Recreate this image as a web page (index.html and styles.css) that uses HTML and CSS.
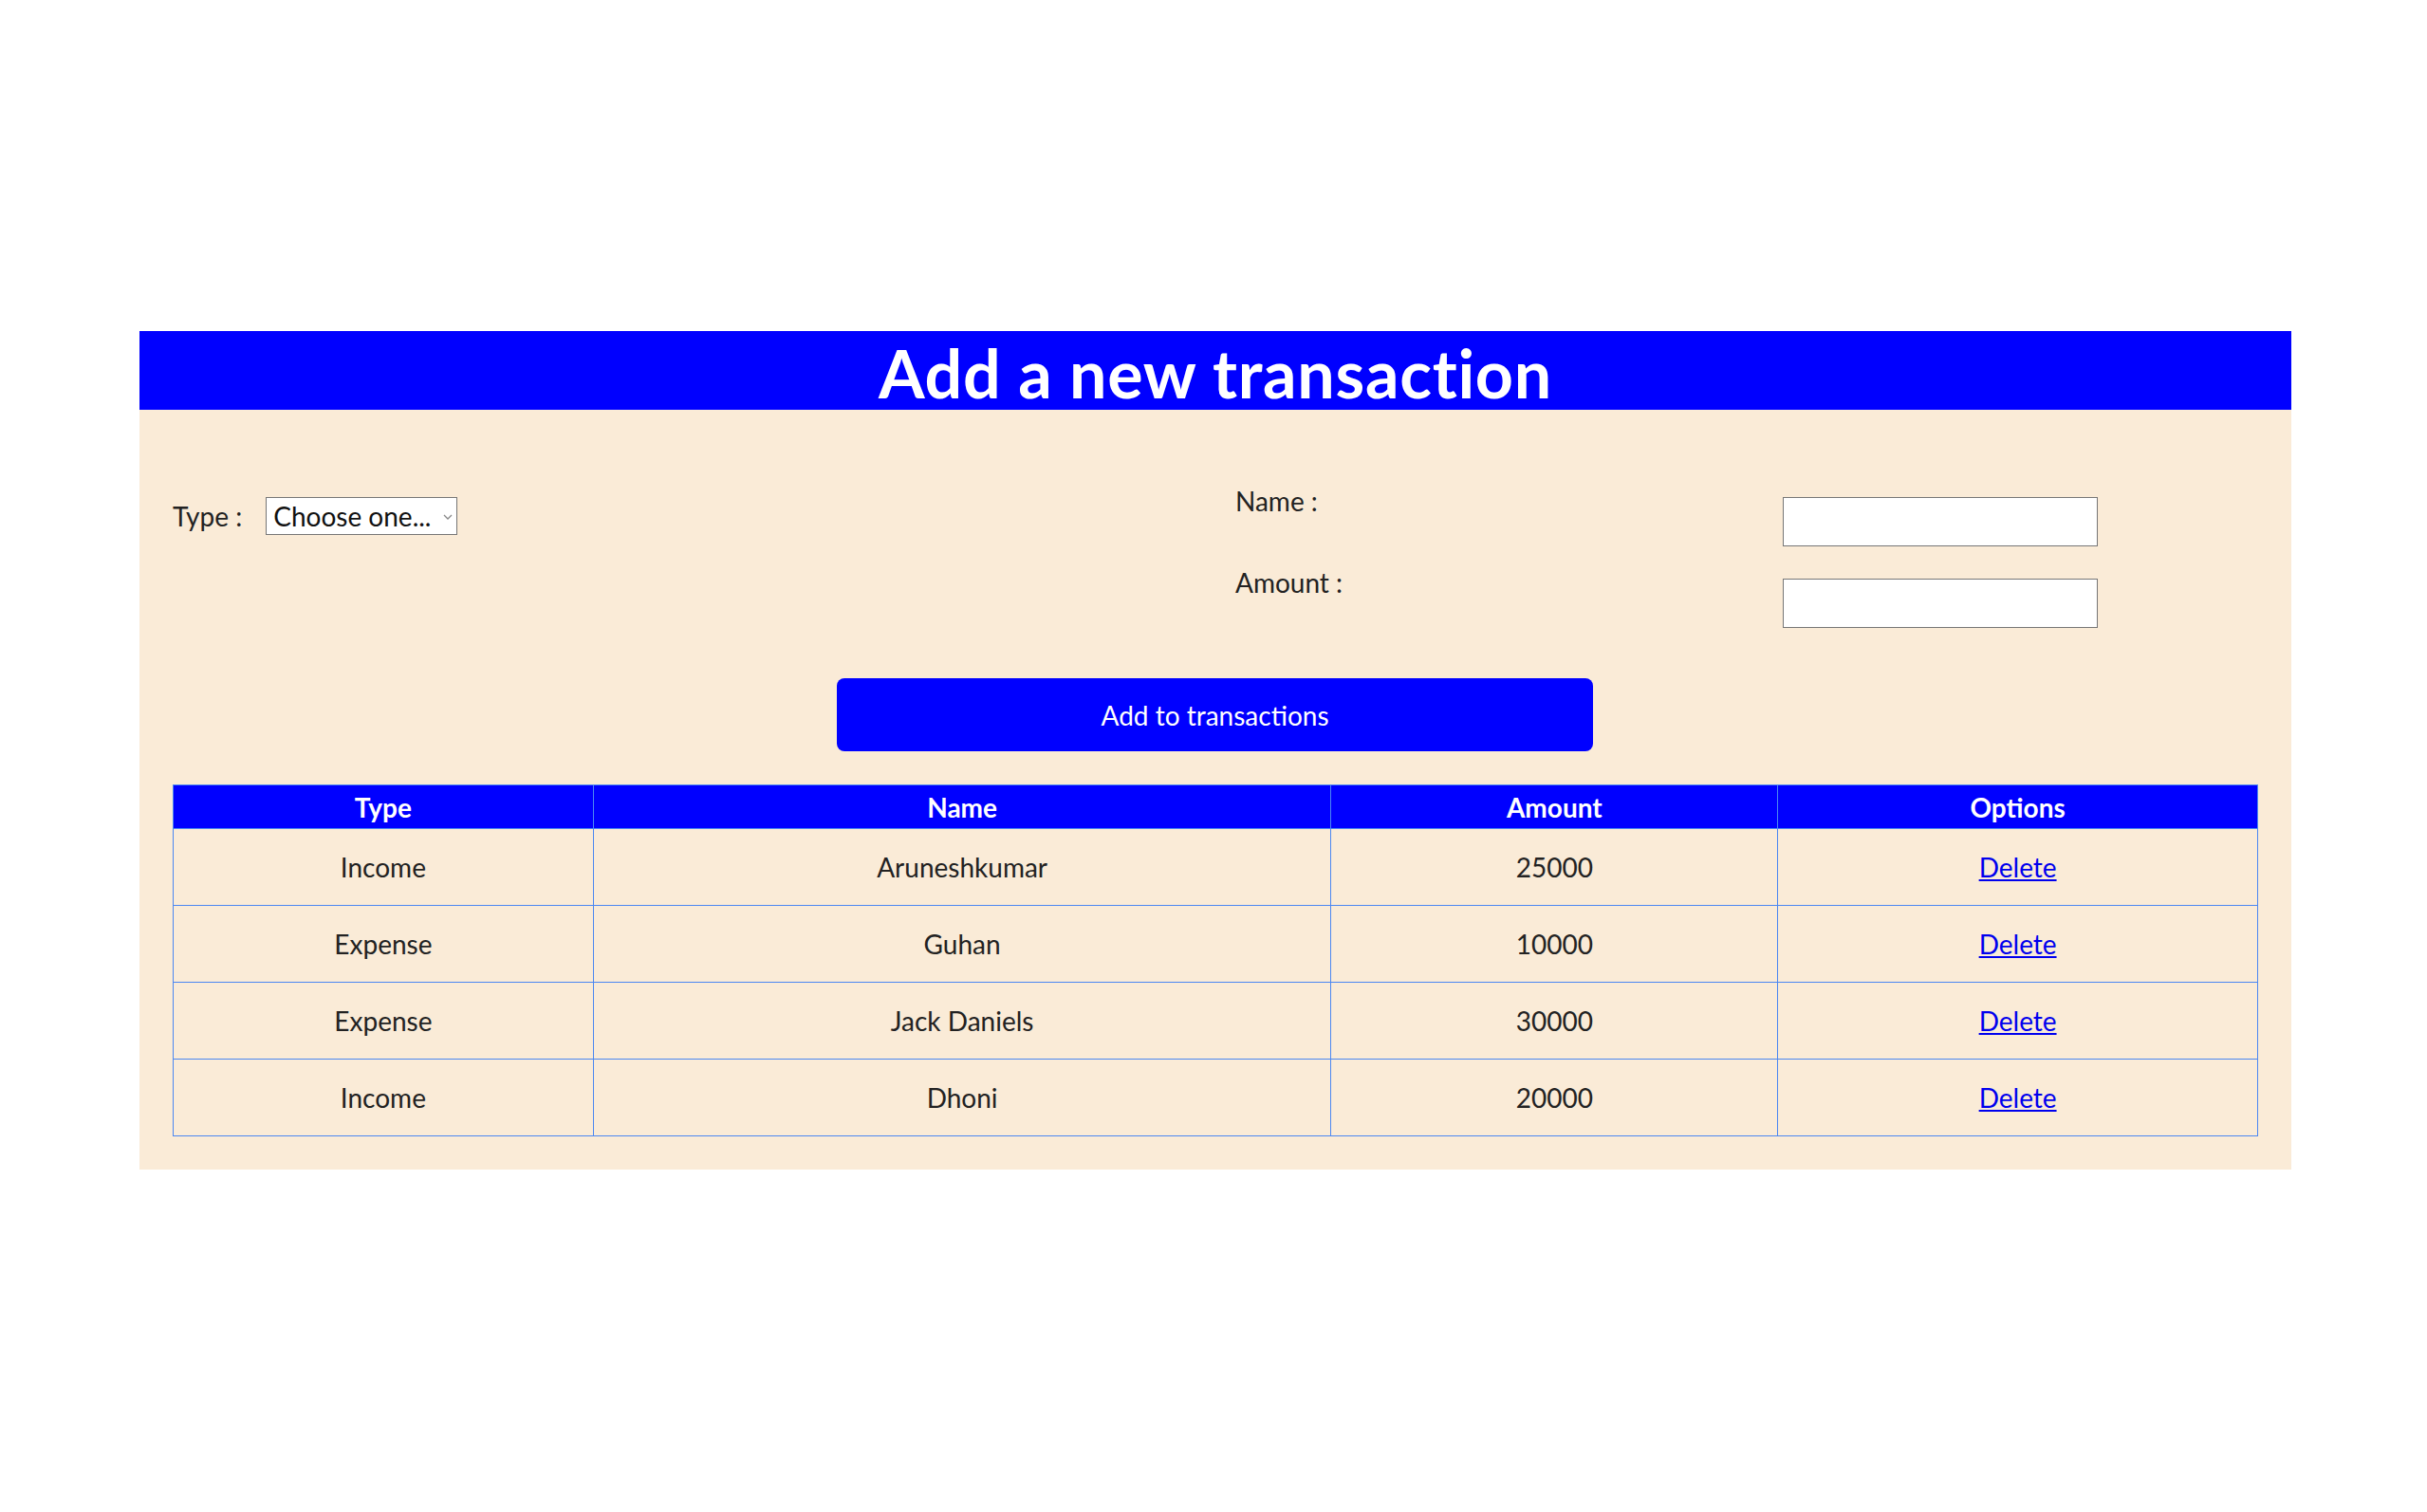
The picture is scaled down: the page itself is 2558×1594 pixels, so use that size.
FILE: index.html
```html
<!DOCTYPE html>
<html lang="en">
<head>
<meta charset="utf-8">
<title>Add a new transaction</title>
<link rel="stylesheet" href="styles.css">
</head>
<body>
<div class="card">
  <div class="card-title"><h1>Add a new transaction</h1></div>
  <div class="card-body">
    <div class="form-row">
      <div class="type-field">
        <label class="label" for="type">Type :</label>
        <span class="select-wrap">
          <select id="type" class="select">
            <option>Choose one...</option>
            <option>Income</option>
            <option>Expense</option>
          </select>
          <svg class="chevron" width="10" height="6" viewBox="0 0 10 6"><path d="M1 1 L5 5 L9 1" fill="none" stroke="#8a8a8a" stroke-width="1.3"/></svg>
        </span>
      </div>
      <div class="fields">
        <label class="label field-label" for="name">Name :</label>
        <input id="name" class="text-input" type="text">
        <label class="label field-label" for="amount">Amount :</label>
        <input id="amount" class="text-input" type="text">
      </div>
    </div>
    <div class="actions">
      <button class="add-btn" type="button">Add to transactions</button>
    </div>
    <table class="tx-table">
      <colgroup>
        <col class="c-type"><col class="c-name"><col class="c-amount"><col class="c-options">
      </colgroup>
      <thead>
        <tr><th>Type</th><th>Name</th><th>Amount</th><th>Options</th></tr>
      </thead>
      <tbody>
        <tr><td>Income</td><td>Aruneshkumar</td><td>25000</td><td><a href="#">Delete</a></td></tr>
        <tr><td>Expense</td><td>Guhan</td><td>10000</td><td><a href="#">Delete</a></td></tr>
        <tr><td>Expense</td><td>Jack Daniels</td><td>30000</td><td><a href="#">Delete</a></td></tr>
        <tr><td>Income</td><td>Dhoni</td><td>20000</td><td><a href="#">Delete</a></td></tr>
      </tbody>
    </table>
  </div>
</div>
</body>
</html>
```
FILE: styles.css
```css
html, body {
  margin: 0;
  padding: 0;
  background: #ffffff;
}
body {
  font-family: "Lato", "Open Sans", sans-serif;
  font-size: 28px;
  color: #222222;
}
.card {
  width: 2268px;
  margin: 349px 0 0 147px;
  background: #faebd7;
}
.card-title {
  background: #0000ff;
  height: 83px;
  text-align: center;
}
.card-title h1 {
  margin: 0;
  padding-top: 5px;
  line-height: 78px;
  font-size: 70px;
  letter-spacing: 0.7px;
  font-weight: 700;
  color: #ffffff;
}
.card-body {
  padding: 0 36px 35px 35px;
}
.form-row {
  display: flex;
  align-items: flex-start;
  padding-top: 79px;
}
.type-field {
  width: 1120px;
  margin-top: 13px;
  display: flex;
  align-items: center;
  gap: 25px;
}
.label {
  line-height: 34px;
}
.select-wrap {
  position: relative;
  display: inline-block;
}
.select {
  appearance: none;
  -webkit-appearance: none;
  width: 202px;
  height: 40px;
  margin: 0;
  padding: 0 0 0 7px;
  border: 1px solid #767676;
  border-radius: 0;
  background: #ffffff;
  font-family: inherit;
  font-size: 28px;
  color: #111111;
}
.chevron {
  position: absolute;
  right: 5px;
  top: 18px;
  pointer-events: none;
}
.fields {
  display: grid;
  grid-template-columns: 577px 332px;
  row-gap: 21px;
  align-items: start;
}
.text-input {
  box-sizing: border-box;
  width: 332px;
  height: 52px;
  margin: 13px 0 0 0;
  border: 1px solid #767676;
  background: #ffffff;
  font-family: inherit;
  font-size: 28px;
}
.actions {
  display: flex;
  justify-content: center;
  padding-top: 53px;
}
.add-btn {
  width: 797px;
  height: 77px;
  border: none;
  border-radius: 8px;
  background: #0000ff;
  color: #ffffff;
  font-family: inherit;
  font-size: 28px;
  cursor: pointer;
}
.tx-table {
  width: 2198px;
  margin-top: 35px;
  border-collapse: collapse;
  border: 1px solid #4b87f2;
}
.c-type { width: 443px; }
.c-name { width: 778px; }
.c-amount { width: 471px; }
.c-options { width: 506px; }
.tx-table th,
.tx-table td {
  border: 1px solid #4b87f2;
  text-align: center;
  padding: 0;
}
.tx-table th {
  background: #0000ff;
  color: #ffffff;
  font-weight: 700;
  height: 45px;
  line-height: 30px;
}
.tx-table td {
  height: 80px;
}
.tx-table a {
  color: #0000ee;
  text-decoration: underline;
}
```
